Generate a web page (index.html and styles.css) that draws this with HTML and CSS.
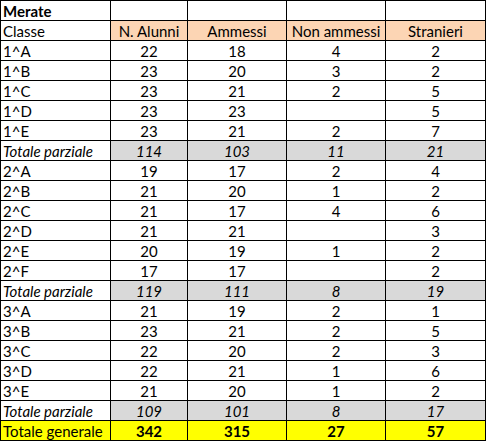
FILE: index.html
```html
<!DOCTYPE html>
<html lang="it">
<head>
<meta charset="utf-8">
<title>Merate</title>
<link rel="stylesheet" href="styles.css">
</head>
<body>
<div class="sheet">
  <div class="c l b">Merate</div><div class="c"></div><div class="c"></div><div class="c"></div><div class="c"></div>
  <div class="c l">Classe</div><div class="c h">N. Alunni</div><div class="c h">Ammessi</div><div class="c h">Non ammessi</div><div class="c h">Stranieri</div>

  <div class="c l">1^A</div><div class="c">22</div><div class="c">18</div><div class="c">4</div><div class="c">2</div>
  <div class="c l">1^B</div><div class="c">23</div><div class="c">20</div><div class="c">3</div><div class="c">2</div>
  <div class="c l">1^C</div><div class="c">23</div><div class="c">21</div><div class="c">2</div><div class="c">5</div>
  <div class="c l">1^D</div><div class="c">23</div><div class="c">23</div><div class="c"></div><div class="c">5</div>
  <div class="c l">1^E</div><div class="c">23</div><div class="c">21</div><div class="c">2</div><div class="c">7</div>
  <div class="c l i">Totale parziale</div><div class="c i g">114</div><div class="c i g">103</div><div class="c i g">11</div><div class="c i g">21</div>

  <div class="c l">2^A</div><div class="c">19</div><div class="c">17</div><div class="c">2</div><div class="c">4</div>
  <div class="c l">2^B</div><div class="c">21</div><div class="c">20</div><div class="c">1</div><div class="c">2</div>
  <div class="c l">2^C</div><div class="c">21</div><div class="c">17</div><div class="c">4</div><div class="c">6</div>
  <div class="c l">2^D</div><div class="c">21</div><div class="c">21</div><div class="c"></div><div class="c">3</div>
  <div class="c l">2^E</div><div class="c">20</div><div class="c">19</div><div class="c">1</div><div class="c">2</div>
  <div class="c l">2^F</div><div class="c">17</div><div class="c">17</div><div class="c"></div><div class="c">2</div>
  <div class="c l i">Totale parziale</div><div class="c i g">119</div><div class="c i g">111</div><div class="c i g">8</div><div class="c i g">19</div>

  <div class="c l">3^A</div><div class="c">21</div><div class="c">19</div><div class="c">2</div><div class="c">1</div>
  <div class="c l">3^B</div><div class="c">23</div><div class="c">21</div><div class="c">2</div><div class="c">5</div>
  <div class="c l">3^C</div><div class="c">22</div><div class="c">20</div><div class="c">2</div><div class="c">3</div>
  <div class="c l">3^D</div><div class="c">22</div><div class="c">21</div><div class="c">1</div><div class="c">6</div>
  <div class="c l">3^E</div><div class="c">21</div><div class="c">20</div><div class="c">1</div><div class="c">2</div>
  <div class="c l i">Totale parziale</div><div class="c i g">109</div><div class="c i g">101</div><div class="c i g">8</div><div class="c i g">17</div>

  <div class="c l y">Totale generale</div><div class="c y b">342</div><div class="c y b">315</div><div class="c y b">27</div><div class="c y b">57</div>
</div>
</body>
</html>
```

FILE: styles.css
```css
html, body {
  margin: 0;
  padding: 0;
  background: #ffffff;
}

.sheet {
  display: grid;
  grid-template-columns: 109px 76px 98px 98px 99px;
  grid-auto-rows: 19px;
  gap: 1px;
  padding: 1px;
  width: 486px;
  box-sizing: border-box;
  background: #000000;
  font-family: Lato, "Open Sans", sans-serif;
  font-size: 15px;
  color: #000000;
}

.c {
  background: #ffffff;
  line-height: 20px;
  text-align: center;
  white-space: nowrap;
  overflow: hidden;
}

.l {
  text-align: left;
  padding-left: 2px;
}

.b {
  font-weight: bold;
}

.i {
  font-style: italic;
}

.h {
  background: #fcd5b4;
}

.g {
  background: #d9d9d9;
}

.y {
  background: #ffff00;
}
```
